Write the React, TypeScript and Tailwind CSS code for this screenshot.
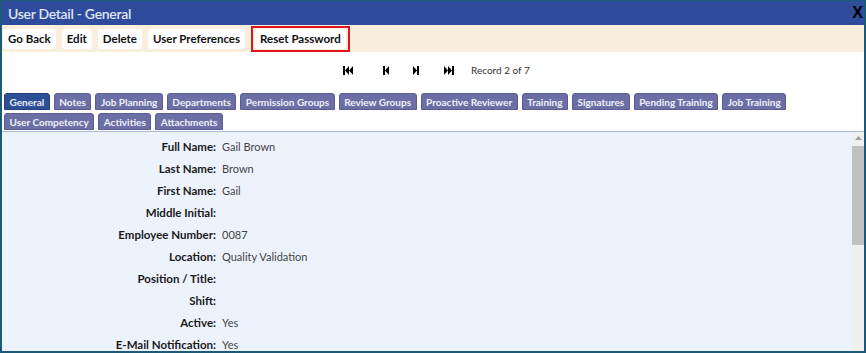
import React from 'react';

const buttons = ['Go Back', 'Edit', 'Delete', 'User Preferences'];

const tabsRow1 = ['General', 'Notes', 'Job Planning', 'Departments', 'Permission Groups', 'Review Groups', 'Proactive Reviewer', 'Training', 'Signatures', 'Pending Training', 'Job Training'];
const tabsRow2 = ['User Competency', 'Activities', 'Attachments'];

const fields = [
    { label: 'Full Name:', value: 'Gail Brown' },
    { label: 'Last Name:', value: 'Brown' },
    { label: 'First Name:', value: 'Gail' },
    { label: 'Middle Initial:', value: '' },
    { label: 'Employee Number:', value: '0087' },
    { label: 'Location:', value: 'Quality Validation' },
    { label: 'Position / Title:', value: '' },
    { label: 'Shift:', value: '' },
    { label: 'Active:', value: 'Yes' },
    { label: 'E-Mail Notification:', value: 'Yes' },
];

function NavIcon({ kind }: { kind: 'first' | 'prev' | 'next' | 'last' }) {
    return (
        <svg width="10" height="9" viewBox="0 0 10 9" fill="black">
            {kind === 'first' && (
                <>
                    <rect x="0" y="0" width="2" height="9" />
                    <polygon points="6,0 2,4.5 6,9" />
                    <polygon points="10,0 6,4.5 10,9" />
                </>
            )}
            {kind === 'prev' && (
                <>
                    <rect x="2" y="0" width="2" height="9" />
                    <polygon points="8,0 4,4.5 8,9" />
                </>
            )}
            {kind === 'next' && (
                <>
                    <polygon points="2,0 6,4.5 2,9" />
                    <rect x="6" y="0" width="2" height="9" />
                </>
            )}
            {kind === 'last' && (
                <>
                    <polygon points="0,0 4,4.5 0,9" />
                    <polygon points="4,0 8,4.5 4,9" />
                    <rect x="8" y="0" width="2" height="9" />
                </>
            )}
        </svg>
    );
}

function Tab({ label, active = false }: { label: string; active?: boolean }) {
    return (
        <div
            className={`h-[17px] px-[4.5px] flex items-center whitespace-nowrap rounded-t-[3px] border text-[10px] font-bold leading-none ${
                active ? 'bg-[#2d4f95] border-[#243f7a] text-[#e8edf7]' : 'bg-[#6c6fa6] border-[#5a5d92] text-[#eef0f8]'
            }`}
        >
            {label}
        </div>
    );
}

export default function App() {
    return (
        <div
            className="w-[866px] h-[353px] flex flex-col overflow-hidden bg-white border-x-2 border-b-2 border-t border-[#1c5b78]"
            style={{ fontFamily: 'Lato, "Open Sans", sans-serif' }}
        >
            {/* Title bar */}
            <div className="h-[24px] flex-none bg-[#2f4c9c] flex items-center justify-between pl-[6px] pr-[1px]">
                <span className="text-[14px] font-semibold text-[#dfe5f4] tracking-[-0.3px]">User Detail - General</span>
                <span className="text-[16px] font-black text-black leading-none" style={{ fontFamily: '"Liberation Sans", sans-serif' }}>X</span>
            </div>

            {/* Toolbar */}
            <div className="h-[27px] flex-none bg-[#faeedc] flex items-center pl-[1px] gap-[6px]">
                {buttons.map(b => (
                    <div key={b} className="h-[20px] px-[5px] flex items-center whitespace-nowrap bg-white rounded-[3px] text-[11.5px] font-bold text-[#111]">
                        {b}
                    </div>
                ))}
                <div className="h-[26px] px-[2px] flex items-center border-2 border-[#e0141b]">
                    <div className="h-[20px] px-[5px] flex items-center whitespace-nowrap bg-white rounded-[3px] text-[11.5px] font-bold text-[#111]">
                        Reset Password
                    </div>
                </div>
            </div>

            {/* Record navigation */}
            <div className="h-[37px] flex-none flex items-center pl-[341px]">
                <NavIcon kind="first" />
                <span className="ml-[28px]"><NavIcon kind="prev" /></span>
                <span className="ml-[20px]"><NavIcon kind="next" /></span>
                <span className="ml-[23px]"><NavIcon kind="last" /></span>
                <span className="ml-[17px] text-[10px] text-[#333]">Record 2 of 7</span>
            </div>

            {/* Tabs */}
            <div className="flex-none flex flex-col gap-[3px] pl-[2px] pt-[4px]">
                <div className="flex gap-[4px]">
                    {tabsRow1.map((t, i) => (
                        <Tab key={t} label={t} active={i === 0} />
                    ))}
                </div>
                <div className="flex gap-[4px]">
                    {tabsRow2.map(t => (
                        <Tab key={t} label={t} />
                    ))}
                </div>
            </div>

            {/* Content */}
            <div className="flex-1 min-h-0 mt-[1px] flex border-t border-[#a8bcd9] bg-[#edf3fd]">
                <div className="flex-1 pt-[4px]">
                    {fields.map(f => (
                        <div key={f.label} className="h-[22px] flex items-center">
                            <div className="w-[214px] text-right text-[11.5px] font-bold text-[#1a1a1a]">{f.label}</div>
                            <div className="ml-[6px] text-[11px] text-[#444]">{f.value}</div>
                        </div>
                    ))}
                </div>
                {/* Scrollbar */}
                <div className="w-[12px] flex-none bg-[#f0f0f0] flex flex-col items-center pt-[4px]">
                    <svg width="7" height="4" viewBox="0 0 7 4" className="mb-[6px]">
                        <polygon points="3.5,0 7,4 0,4" fill="#a0a0a0" />
                    </svg>
                    <div className="w-full h-[99px] bg-[#c1c1c1]" />
                </div>
            </div>
        </div>
    );
}
